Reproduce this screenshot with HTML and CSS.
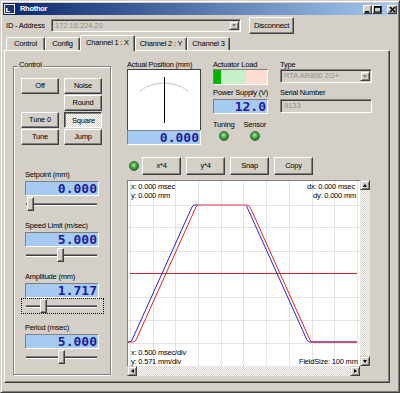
FILE: index.html
```html
<!DOCTYPE html>
<html>
<head>
<meta charset="utf-8">
<title>Rhothor</title>
<link rel="stylesheet" href="styles.css">
</head>
<body>
<div class="window">
  <div class="titlebar">
    <svg class="appicon" width="11" height="10" viewBox="0 0 11 10">
      <rect x="0.5" y="0.5" width="10" height="9" fill="#1c3570" stroke="#e8ecf4"/>
      <rect x="2" y="4" width="1.5" height="4" fill="#ffffff"/>
      <rect x="2" y="7" width="4" height="1" fill="#ffffff"/>
    </svg>
    <span class="title">Rhothor</span>
    <div class="capbtns">
      <span class="capbtn"><svg width="7" height="7" viewBox="0 0 7 7"><rect x="1" y="5" width="4" height="1.5" fill="#000"/></svg></span>
      <span class="capbtn wide"><svg width="7" height="7" viewBox="0 0 7 7"><rect x="0.5" y="0.5" width="6" height="5.5" fill="none" stroke="#000"/><rect x="0" y="0" width="7" height="1.8" fill="#000"/></svg></span>
      <span class="capbtn wide close"><svg width="7" height="7" viewBox="0 0 7 7"><path d="M1 1 L6 6 M6 1 L1 6" stroke="#000" stroke-width="1.5"/></svg></span>
    </div>
  </div>
  <div class="client">
    <div class="addr">
      <span class="addr-lbl">ID - Address</span>
      <div class="combo addr-combo"><span class="combo-text">172.16.224.20</span><span class="dropbtn"><span class="arrow-down"></span></span></div>
      <button class="btn disconnect">Disconnect</button>
    </div>
    <div class="tabs">
      <div class="tab t-control">Control</div>
      <div class="tab t-config">Config</div>
      <div class="tab t-ch1 active">Channel 1 : X</div>
      <div class="tab t-ch2">Channel 2 : Y</div>
      <div class="tab t-ch3">Channel 3</div>
    </div>
    <div class="panel">
      <div class="group">
        <div class="legend">Control</div>
        <div class="btngrid">
          <button class="btn b-off">Off</button>
          <button class="btn b-noise">Noise</button>
          <button class="btn b-round">Round</button>
          <button class="btn b-tune0">Tune 0</button>
          <button class="btn b-square pressed">Square</button>
          <button class="btn b-tune">Tune</button>
          <button class="btn b-jump">Jump</button>
        </div>
        <div class="field first">
          <div class="flabel">Setpoint (mm)</div>
          <div class="lcd">0.000</div>
          <div class="slider"><span class="thumb" style="margin-left:6px"></span></div>
        </div>
        <div class="field">
          <div class="flabel">Speed Limit (m/sec)</div>
          <div class="lcd">5.000</div>
          <div class="slider"><span class="thumb" style="margin-left:36px"></span></div>
        </div>
        <div class="field">
          <div class="flabel">Amplitude (mm)</div>
          <div class="lcd">1.717</div>
          <div class="slider focus"><span class="thumb" style="margin-left:19px"></span></div>
        </div>
        <div class="field">
          <div class="flabel">Period (msec)</div>
          <div class="lcd">5.000</div>
          <div class="slider"><span class="thumb" style="margin-left:37px"></span></div>
        </div>
      </div>
      <div class="main">
        <div class="toprow">
          <div class="col-a">
            <div class="tlabel">Actual Position (mm)</div>
            <div class="meter">
              <svg width="72" height="60" viewBox="0 0 72 60">
                <path d="M12 21 A40 40 0 0 1 60 21" fill="none" stroke="#c4c4c4" stroke-width="1"/>
                <line x1="36.5" y1="7" x2="36.5" y2="53" stroke="#000" stroke-width="1"/>
              </svg>
            </div>
            <div class="lcd pos">0.000</div>
          </div>
          <div class="col-b">
            <div class="tlabel">Actuator Load</div>
            <div class="loadbar"></div>
            <div class="tlabel gap">Power Supply (V)</div>
            <div class="lcd psu">12.0</div>
            <div class="tunerow">
              <div class="tcol"><span class="tlabel">Tuning</span><span class="led"></span></div>
              <div class="tcol"><span class="tlabel">Sensor</span><span class="led"></span></div>
            </div>
          </div>
          <div class="col-c">
            <div class="tlabel">Type</div>
            <div class="combo type-combo"><span class="combo-text">RTA AR800 2G+</span><span class="dropbtn"><span class="arrow-down"></span></span></div>
            <div class="tlabel gap">Serial Number</div>
            <div class="edit"><span class="combo-text">9133</span></div>
          </div>
        </div>
        <div class="toolbar">
          <span class="led tb-led"></span>
          <button class="btn tb first">x*4</button>
          <button class="btn tb">y*4</button>
          <button class="btn tb">Snap</button>
          <button class="btn tb">Copy</button>
        </div>
        <div class="chartbox">
          <div class="chart">
            <svg class="plot" width="232" height="185" viewBox="0 0 232 185">
              <g stroke="#e2e2e2" stroke-width="1">
                <line x1="2.5" y1="0" x2="2.5" y2="185"/>
                <line x1="25.5" y1="0" x2="25.5" y2="185"/>
                <line x1="47.5" y1="0" x2="47.5" y2="185"/>
                <line x1="70.5" y1="0" x2="70.5" y2="185"/>
                <line x1="93.5" y1="0" x2="93.5" y2="185"/>
                <line x1="115.5" y1="0" x2="115.5" y2="185"/>
                <line x1="138.5" y1="0" x2="138.5" y2="185"/>
                <line x1="161.5" y1="0" x2="161.5" y2="185"/>
                <line x1="184.5" y1="0" x2="184.5" y2="185"/>
                <line x1="206.5" y1="0" x2="206.5" y2="185"/>
                <line x1="229.5" y1="0" x2="229.5" y2="185"/>
                <line x1="0" y1="24.5" x2="232" y2="24.5"/>
                <line x1="0" y1="46.5" x2="232" y2="46.5"/>
                <line x1="0" y1="70.5" x2="232" y2="70.5"/>
                <line x1="0" y1="116.5" x2="232" y2="116.5"/>
                <line x1="0" y1="139.5" x2="232" y2="139.5"/>
                <line x1="0" y1="162.5" x2="232" y2="162.5"/>
              </g>
              <line x1="2" y1="92.5" x2="229" y2="92.5" stroke="#c42a2a" stroke-width="1"/>
              <path d="M0 161 L1 161 Q3 161 4 159 L64 26 Q65 24 67 24 L116 24 Q118 24 119 26 L179 159 Q180 161 182 161 L229 161" fill="none" stroke="#2424d8" stroke-width="1"/>
              <path d="M0 161 L5 161 Q7 161 8 159 L68 26 Q69 24 71 24 L119 24 Q121 24 122 26 L182 159 Q183 161 185 161 L229 161" fill="none" stroke="#e02424" stroke-width="1"/>
              <path d="M70 24 L119 24" fill="none" stroke="#f6a8a8" stroke-width="1.6"/>
              <text class="ptext" x="3" y="8">x: 0.000 msec</text>
              <text class="ptext" x="3" y="17">y: 0.000 mm</text>
              <text class="ptext" x="179" y="8">dx: 0.000 msec</text>
              <text class="ptext" x="185" y="17">dy: 0.000 mm</text>
              <text class="ptext" x="3" y="174">x: 0.500 msec/div</text>
              <text class="ptext" x="3" y="183">y: 0.571 mm/div</text>
              <text class="ptext" x="171" y="183">FieldSize: 100 mm</text>
            </svg>
          </div>
          <div class="vscroll">
            <span class="sbtn"><span class="arrow-up"></span></span>
            <span class="sbtn"><span class="arrow-down dark"></span></span>
          </div>
          <div class="hscroll">
            <span class="sbtn"><span class="arrow-left"></span></span>
            <span class="sbtn"><span class="arrow-right"></span></span>
          </div>
          <div class="corner"></div>
        </div>
      </div>
    </div>
  </div>
</div>
</body>
</html>
```

FILE: styles.css
```css
* { box-sizing: border-box; margin: 0; padding: 0; }
html, body { width: 400px; height: 393px; overflow: hidden; }
body {
  background: #d4d0c8;
  font-family: "Liberation Sans", Arial, sans-serif;
  font-size: 7.5px;
  letter-spacing: -0.2px;
  color: #000;
  line-height: 1;
}

.window {
  width: 400px; height: 393px;
  padding: 2px;
  border: 1px solid;
  border-color: #d4d0c8 #404040 #404040 #d4d0c8;
  box-shadow: inset 1px 1px #fff, inset -1px -1px #808080;
  display: flex; flex-direction: column;
}

/* title bar */
.titlebar {
  flex: none; height: 12px;
  display: flex; align-items: center;
  background: linear-gradient(to right, #0a246a, #a6caf0);
  padding-left: 1px;
}
.appicon { display: block; flex: none; }
.title { margin-left: 5px; color: #fff; font-weight: bold; letter-spacing: -0.3px; }
.capbtns { margin-left: auto; display: flex; align-items: center; }
.capbtn {
  width: 9px; height: 9px;
  display: flex; align-items: center; justify-content: center;
  background: #d4d0c8;
  border: 1px solid; border-color: #fff #404040 #404040 #fff;
  box-shadow: inset -1px -1px #808080;
}
.capbtn svg { display: block; }
.capbtn.wide { width: 10px; }
.capbtn.close { margin-left: 5px; }

.client { flex: 1; padding-left: 1px; display: flex; flex-direction: column; }

/* common widgets */
.btn {
  font: inherit; letter-spacing: inherit; color: #000;
  background: #d4d0c8;
  border: 1px solid; border-color: #fff #404040 #404040 #fff;
  box-shadow: inset -1px -1px #808080;
  display: flex; align-items: center; justify-content: center;
  white-space: nowrap;
}
.btn.pressed {
  border-color: #404040 #fff #fff #404040;
  box-shadow: inset 1px 1px #808080;
  background: repeating-conic-gradient(#ffffff 0 25%, #d4d0c8 0 50%) 0 0 / 2px 2px;
  padding: 1px 0 0 1px;
}
.combo, .edit {
  display: flex; align-items: center;
  background: #d4d0c8;
  border: 1px solid; border-color: #808080 #fff #fff #808080;
  box-shadow: inset 1px 1px #404040, inset -1px -1px #d4d0c8;
  padding: 1px;
}
.combo-text { flex: 1; padding-left: 2px; color: #8e8e8e; white-space: nowrap; overflow: hidden; letter-spacing: 0; }
.dropbtn {
  flex: none; width: 10px; align-self: stretch;
  display: flex; align-items: center; justify-content: center;
  background: #d4d0c8;
  border: 1px solid; border-color: #d4d0c8 #404040 #404040 #d4d0c8;
  box-shadow: inset 1px 1px #fff, inset -1px -1px #808080;
}
.arrow-down { width: 0; height: 0; border-left: 2.5px solid transparent; border-right: 2.5px solid transparent; border-top: 3px solid #808080; }
.arrow-down.dark, .sbtn .arrow-down { border-top-color: #000; }
.arrow-up { width: 0; height: 0; border-left: 2.5px solid transparent; border-right: 2.5px solid transparent; border-bottom: 3px solid #000; }
.arrow-left { width: 0; height: 0; border-top: 2.5px solid transparent; border-bottom: 2.5px solid transparent; border-right: 3px solid #000; }
.arrow-right { width: 0; height: 0; border-top: 2.5px solid transparent; border-bottom: 2.5px solid transparent; border-left: 3px solid #000; }

.lcd {
  height: 15px;
  background: #a6caf0;
  border: 1px solid; border-color: #808080 #fff #fff #808080;
  font-family: "DejaVu Sans Mono", "Liberation Mono", monospace;
  font-size: 13px; font-weight: bold; letter-spacing: 0;
  line-height: 13px;
  color: #1c1ca0;
  text-align: right;
  padding-right: 1px;
}

.led {
  display: block; width: 10px; height: 10px; border-radius: 50%;
  background: radial-gradient(circle at 45% 40%, #b4f0a8 0, #46be46 35%, #137a13 75%, #0b4f0b 100%);
  border: 1px solid #4a5a4a;
}

/* address row */
.addr { flex: none; height: 17px; margin-top: 2px; display: flex; align-items: center; padding-left: 2px; }
.addr-lbl { width: 45px; white-space: nowrap; }
.addr-combo { width: 190px; height: 13px; }
.disconnect { margin-left: 8px; width: 45px; height: 17px; }

/* tabs */
.tabs { flex: none; height: 15px; margin-top: 1px; display: flex; align-items: flex-end; padding-left: 2px; }
.tab {
  height: 13px; line-height: 12px; text-align: center; white-space: nowrap;
  border-top: 1px solid #fff; border-left: 1px solid #fff; border-right: 1px solid #404040;
  box-shadow: inset -1px 0 #808080;
  border-radius: 2px 2px 0 0;
  background: #d4d0c8;
}
.tab.active { height: 16px; margin-bottom: -1px; position: relative; z-index: 1; line-height: 13px; }
.t-control { width: 39px; }
.t-config { width: 35px; }
.t-ch1 { width: 55px; }
.t-ch2 { width: 52px; }
.t-ch3 { width: 43px; }

/* panel */
.panel {
  flex: none; width: 386px; height: 333px;
  border: 1px solid; border-color: #fff #404040 #404040 #fff;
  box-shadow: inset -1px -1px #808080;
  display: flex; align-items: flex-start;
  padding: 10px 0 0 8px;
}

/* control group */
.group {
  flex: none; width: 98px; height: 309px; margin-top: 5px;
  border: 1px solid #808080;
  box-shadow: inset 1px 1px #fff, 1px 1px #fff;
  padding-left: 7px;
}
.legend { margin: -7px 0 0 -3px; padding: 0 1px; background: #d4d0c8; width: max-content; height: 10px; line-height: 10px; }
.btngrid {
  margin-top: 8px;
  display: grid;
  grid-template-columns: 38px 38px;
  grid-template-rows: repeat(4, 16px);
  column-gap: 5px; row-gap: 1px;
}
.b-off { grid-area: 1 / 1; }
.b-noise { grid-area: 1 / 2; }
.b-round { grid-area: 2 / 2; }
.b-tune0 { grid-area: 3 / 1; }
.b-square { grid-area: 3 / 2; }
.b-tune { grid-area: 4 / 1; }
.b-jump { grid-area: 4 / 2; }

.field { margin-top: 9px; }
.field.first { margin-top: 25px; }
.flabel { margin-left: 4px; height: 10px; line-height: 10px; white-space: nowrap; }
.field .lcd { margin: 1px 0 0 4px; width: 74px; }
.slider {
  width: 83px; height: 16px; padding-top: 1px;
  background:
    linear-gradient(#808080, #808080) 5px 7px / 71px 1px no-repeat,
    linear-gradient(#404040, #404040) 5px 8px / 71px 1px no-repeat,
    linear-gradient(#ffffff, #ffffff) 5px 9px / 71px 1px no-repeat;
}
.slider.focus { outline: 1px dotted #000; outline-offset: -1px; }
.thumb {
  display: block; width: 7px; height: 14px;
  background: #d4d0c8;
  border: 1px solid; border-color: #fff #404040 #404040 #fff;
  box-shadow: inset -1px -1px #808080;
}

/* right side */
.main { margin-left: 16px; display: flex; flex-direction: column; }
.toprow { display: flex; align-items: flex-start; }
.tlabel { display: block; height: 8px; line-height: 8px; white-space: nowrap; }
.tlabel.gap { margin-top: 4px; }
.col-a { width: 74px; flex: none; }
.meter { height: 61px; background: #fff; border: 1px solid #404040; border-bottom: none; }
.meter svg { display: block; }
.col-b { width: 55px; flex: none; margin-left: 12px; }
.loadbar {
  height: 16px;
  border: 1px solid; border-color: #808080 #fff #fff #808080;
  background: linear-gradient(to right, #00b400 0 7px, #c8f0c8 7px 32px, #ffdcd0 32px);
}
.lcd.psu { margin-top: 2px; }
.tunerow { display: flex; gap: 9px; margin-top: 7px; }
.tcol { display: flex; flex-direction: column; align-items: center; }
.tcol .led { margin-top: 2px; }
.col-c { width: 92px; flex: none; margin-left: 12px; }
.type-combo { height: 14px; }
.col-c .tlabel.gap { margin-top: 6px; }
.edit { height: 14px; margin-top: 2px; }

.toolbar { display: flex; align-items: center; height: 18px; margin-top: 12px; }
.tb-led { margin-left: 2px; }
.tb { width: 39px; height: 18px; margin-left: 5px; }
.tb.first { margin-left: 3px; }

.chartbox {
  margin-top: 5px;
  display: grid;
  grid-template-columns: 233px 10px;
  grid-template-rows: 186px 10px;
}
.chart { background: #fff; border-left: 1px solid #808080; border-top: 1px solid #808080; }
.plot { display: block; }
.ptext { font-family: "Liberation Sans", Arial, sans-serif; font-size: 7.5px; letter-spacing: -0.2px; fill: #000; }
.vscroll, .hscroll {
  display: flex; justify-content: space-between;
  background: repeating-conic-gradient(#ffffff 0 25%, #d4d0c8 0 50%) 0 0 / 2px 2px;
}
.vscroll { flex-direction: column; }
.sbtn {
  width: 10px; height: 10px;
  display: flex; align-items: center; justify-content: center;
  background: #d4d0c8;
  border: 1px solid; border-color: #d4d0c8 #404040 #404040 #d4d0c8;
  box-shadow: inset 1px 1px #fff, inset -1px -1px #808080;
}
.corner { background: #d4d0c8; }
```
